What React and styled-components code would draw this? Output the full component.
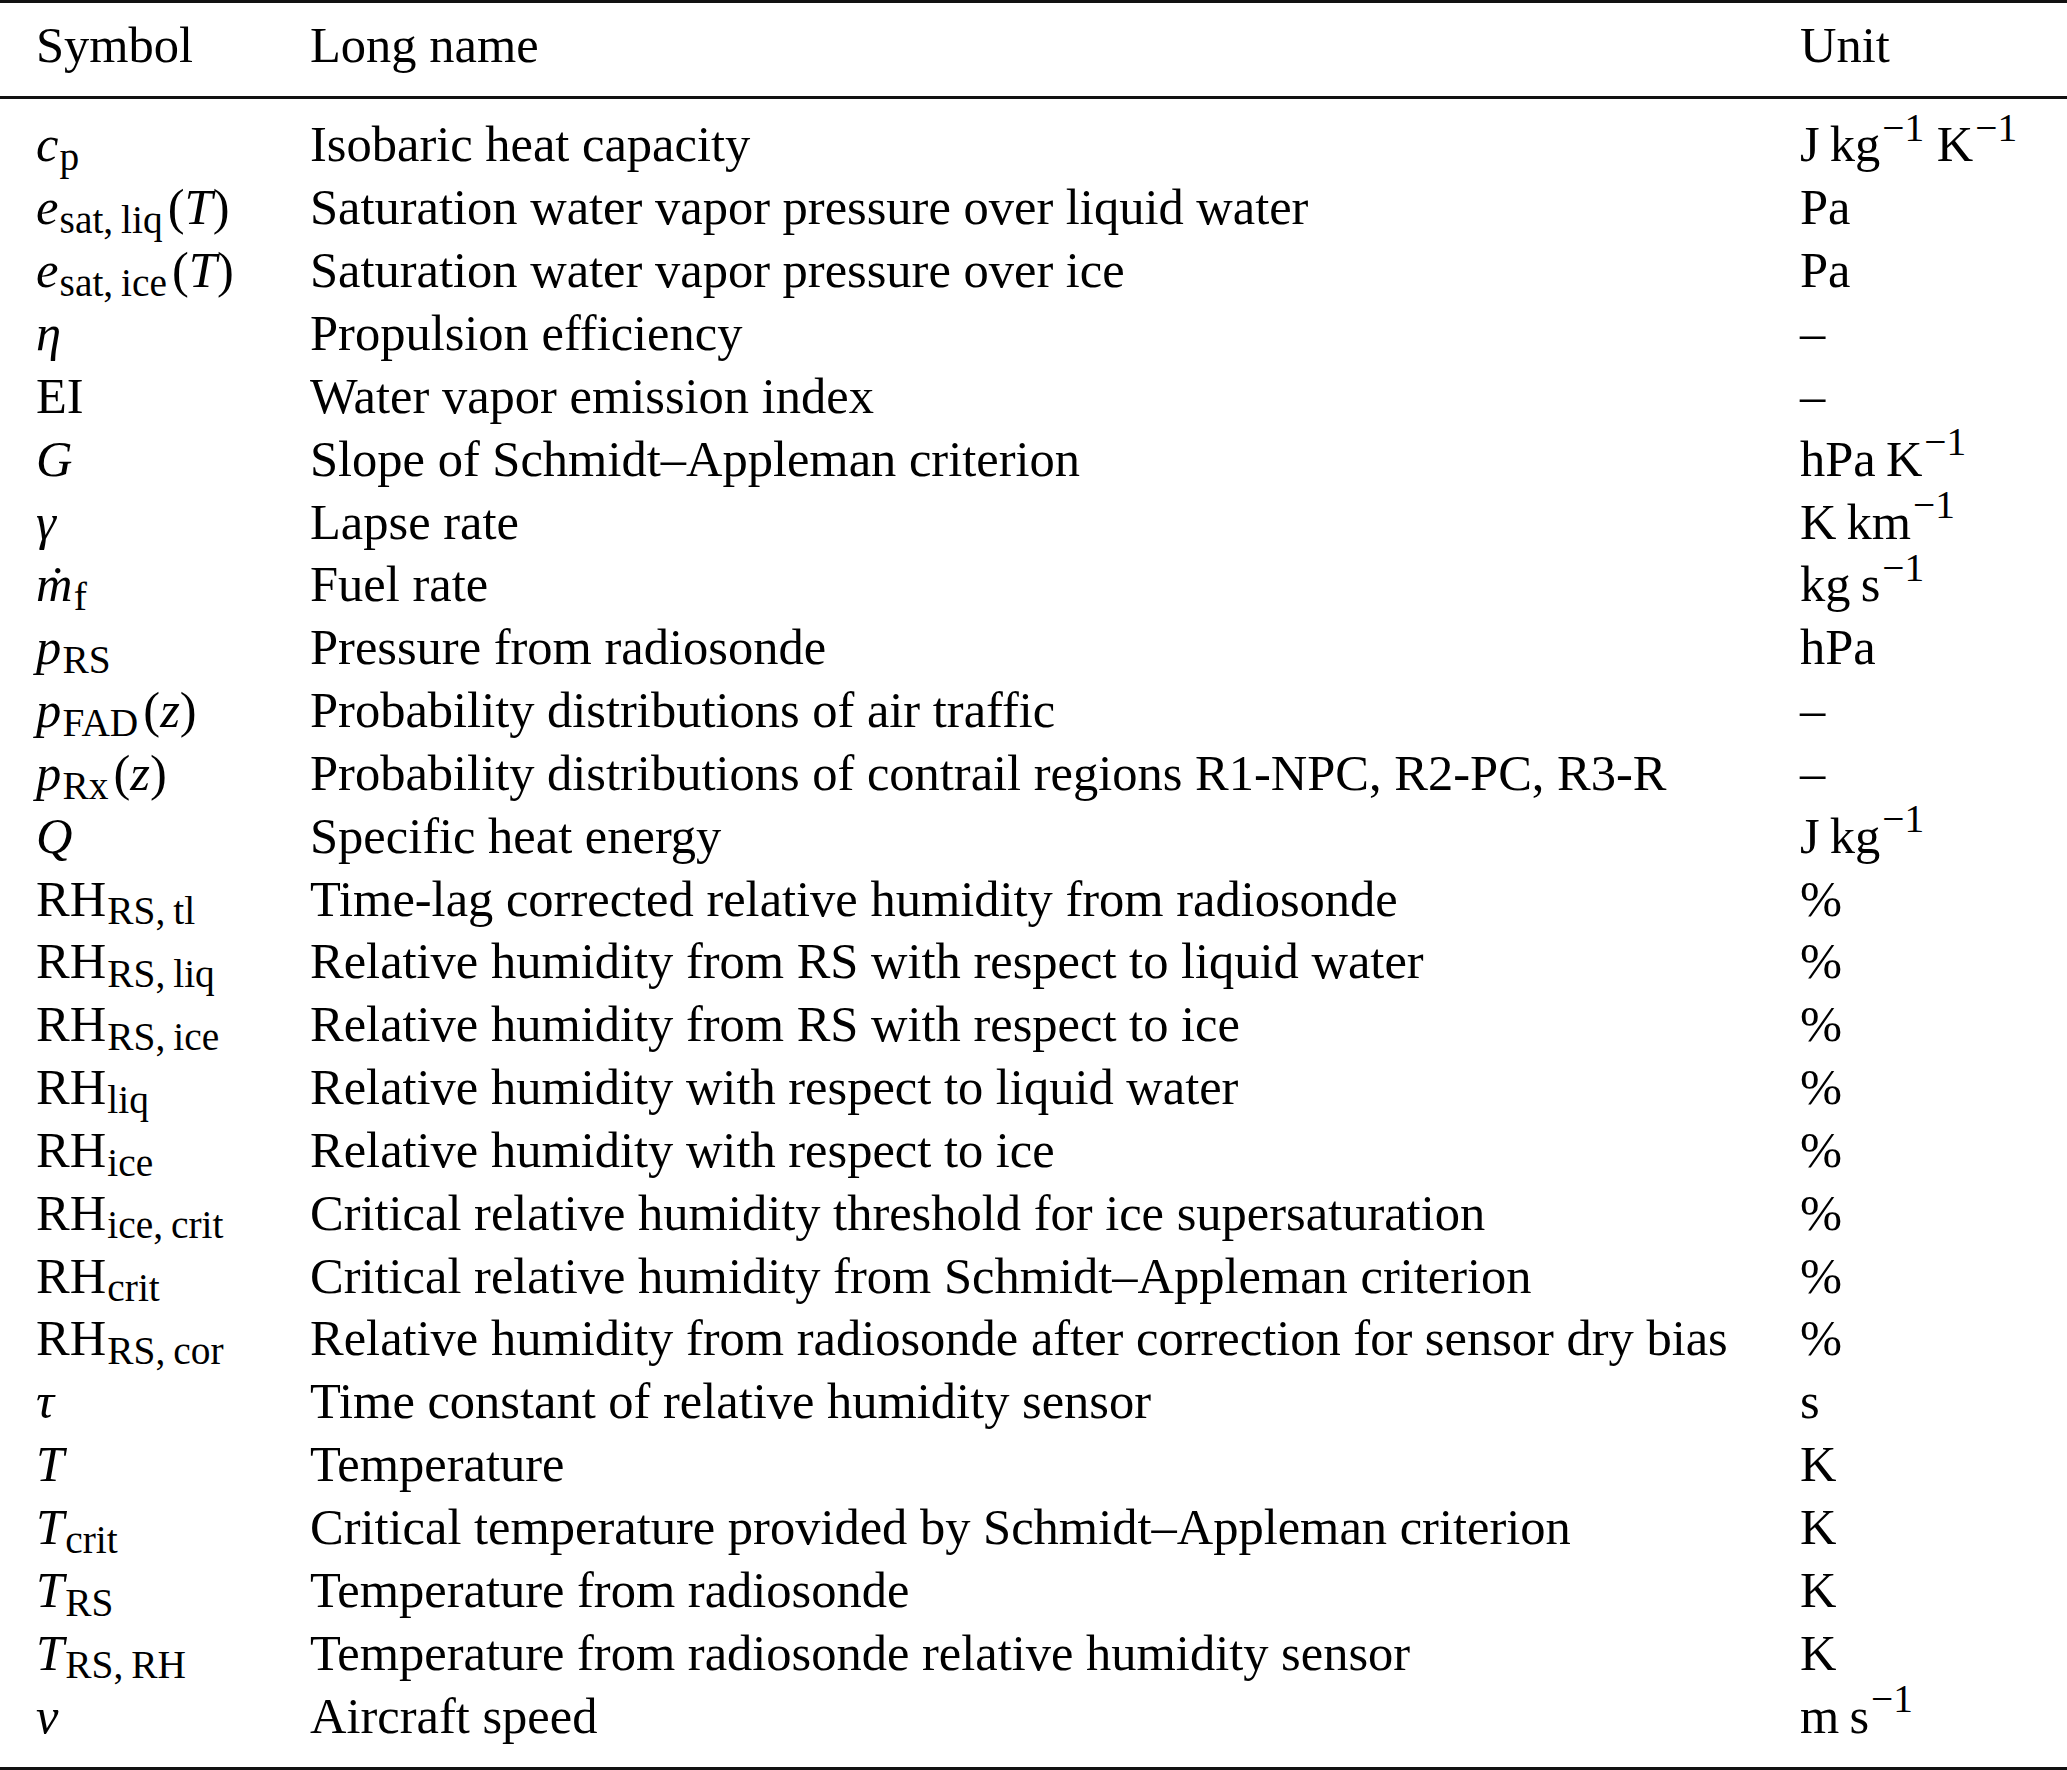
import styled, { createGlobalStyle } from "styled-components";

const GlobalStyle = createGlobalStyle`
  html, body {
    margin: 0;
    padding: 0;
    background: #fff;
  }
  body {
    font-family: "Liberation Serif", "Times New Roman", serif;
    color: #000;
  }
`;

const Table = styled.div`
  width: 2067px;
  display: flex;
  flex-direction: column;
  font-size: 50.5px;
  line-height: 62.85px;
`;

const Rule = styled.div`
  height: 3px;
  background: #111;
`;

const Section = styled.div`
  padding: ${(p) => p.pad};
  display: flex;
  flex-direction: column;
`;

const Row = styled.div`
  display: grid;
  grid-template-columns: 274px 1490px 1fr;
  padding-left: 36px;
  height: 62.85px;
  white-space: nowrap;
`;

const Cell = styled.div``;

const V = styled.span`
  font-style: italic;
`;

const Sub = styled.span`
  font-size: 0.78em;
  line-height: 0;
  vertical-align: -0.22em;
  margin-left: 0.03em;
`;

const Sup = styled.span`
  font-size: 0.78em;
  line-height: 0;
  vertical-align: 0.52em;
  margin-left: 0.05em;
`;

const Paren = styled.span`
  margin-left: 0.1em;
`;

const t = "\u2009";
const m1 = "\u22121";
const dash = "\u2013";

const rows = [
  { sym: <><V>c</V><Sub>p</Sub></>, name: "Isobaric heat capacity", unit: <>J{t}kg<Sup>{m1}</Sup> K<Sup>{m1}</Sup></> },
  { sym: <><V>e</V><Sub>sat,{t}liq</Sub><Paren>(<V>T</V>)</Paren></>, name: "Saturation water vapor pressure over liquid water", unit: "Pa" },
  { sym: <><V>e</V><Sub>sat,{t}ice</Sub><Paren>(<V>T</V>)</Paren></>, name: "Saturation water vapor pressure over ice", unit: "Pa" },
  { sym: <V>η</V>, name: "Propulsion efficiency", unit: dash },
  { sym: "EI", name: "Water vapor emission index", unit: dash },
  { sym: <V>G</V>, name: "Slope of Schmidt–Appleman criterion", unit: <>hPa{t}K<Sup>{m1}</Sup></> },
  { sym: <V>γ</V>, name: "Lapse rate", unit: <>K{t}km<Sup>{m1}</Sup></> },
  { sym: <><V>ṁ</V><Sub>f</Sub></>, name: "Fuel rate", unit: <>kg{t}s<Sup>{m1}</Sup></> },
  { sym: <><V>p</V><Sub>RS</Sub></>, name: "Pressure from radiosonde", unit: "hPa" },
  { sym: <><V>p</V><Sub>FAD</Sub><Paren>(<V>z</V>)</Paren></>, name: "Probability distributions of air traffic", unit: dash },
  { sym: <><V>p</V><Sub>Rx</Sub><Paren>(<V>z</V>)</Paren></>, name: "Probability distributions of contrail regions R1-NPC, R2-PC, R3-R", unit: dash },
  { sym: <V>Q</V>, name: "Specific heat energy", unit: <>J{t}kg<Sup>{m1}</Sup></> },
  { sym: <>RH<Sub>RS,{t}tl</Sub></>, name: "Time-lag corrected relative humidity from radiosonde", unit: "%" },
  { sym: <>RH<Sub>RS,{t}liq</Sub></>, name: "Relative humidity from RS with respect to liquid water", unit: "%" },
  { sym: <>RH<Sub>RS,{t}ice</Sub></>, name: "Relative humidity from RS with respect to ice", unit: "%" },
  { sym: <>RH<Sub>liq</Sub></>, name: "Relative humidity with respect to liquid water", unit: "%" },
  { sym: <>RH<Sub>ice</Sub></>, name: "Relative humidity with respect to ice", unit: "%" },
  { sym: <>RH<Sub>ice,{t}crit</Sub></>, name: "Critical relative humidity threshold for ice supersaturation", unit: "%" },
  { sym: <>RH<Sub>crit</Sub></>, name: "Critical relative humidity from Schmidt–Appleman criterion", unit: "%" },
  { sym: <>RH<Sub>RS,{t}cor</Sub></>, name: "Relative humidity from radiosonde after correction for sensor dry bias", unit: "%" },
  { sym: <V>τ</V>, name: "Time constant of relative humidity sensor", unit: "s" },
  { sym: <V>T</V>, name: "Temperature", unit: "K" },
  { sym: <><V>T</V><Sub>crit</Sub></>, name: "Critical temperature provided by Schmidt–Appleman criterion", unit: "K" },
  { sym: <><V>T</V><Sub>RS</Sub></>, name: "Temperature from radiosonde", unit: "K" },
  { sym: <><V>T</V><Sub>RS,{t}RH</Sub></>, name: "Temperature from radiosonde relative humidity sensor", unit: "K" },
  { sym: <V>v</V>, name: "Aircraft speed", unit: <>m{t}s<Sup>{m1}</Sup></> },
];

export default function App() {
  return (
    <>
      <GlobalStyle />
      <Table>
        <Rule />
        <Section pad="10.5px 0 19.6px">
          <Row>
            <Cell>Symbol</Cell>
            <Cell>Long name</Cell>
            <Cell>Unit</Cell>
          </Row>
        </Section>
        <Rule />
        <Section pad="14.5px 0 19.6px">
          {rows.map((r, i) => (
            <Row key={i}>
              <Cell>{r.sym}</Cell>
              <Cell>{r.name}</Cell>
              <Cell>{r.unit}</Cell>
            </Row>
          ))}
        </Section>
        <Rule />
      </Table>
    </>
  );
}
